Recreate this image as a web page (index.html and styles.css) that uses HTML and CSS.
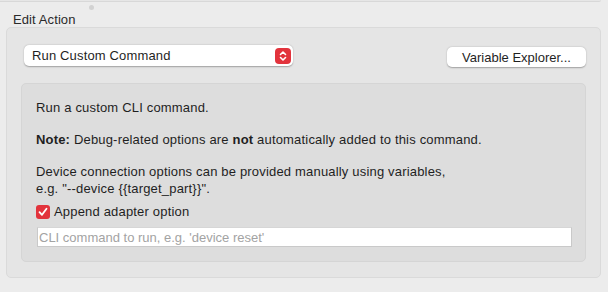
FILE: index.html
```html
<!DOCTYPE html>
<html><head>
<meta charset="utf-8">
<title>Edit Action</title>
<link rel="stylesheet" href="styles.css">
</head>
<body>
  <div class="prev-box"></div>
  <div class="splitter"><span class="dot"></span></div>
  <div class="group-title">Edit Action</div>
  <section class="group">
    <div class="toolbar">
      <div class="popup">
        <span class="popup-label">Run Custom Command</span>
        <span class="stepper">
          <svg width="16" height="16" viewBox="0 0 16 16"><path d="M5.5 6.5 L8 4 L10.5 6.5 M5.5 9.5 L8 12 L10.5 9.5" fill="none" stroke="#fff" stroke-width="1.6" stroke-linecap="round" stroke-linejoin="round"/></svg>
        </span>
      </div>
      <button class="btn">Variable Explorer...</button>
    </div>
    <div class="inner">
      <p>Run a custom CLI command.</p>
      <p><b>Note:</b> Debug-related options are <b>not</b> automatically added to this command.</p>
      <p>Device connection options can be provided manually using variables,<br>e.g. "--device {{target_part}}".</p>
      <label class="check">
        <span class="box"><svg width="14" height="14" viewBox="0 0 14 14"><path d="M3.5 7.2 L6 9.8 L10.5 3.8" fill="none" stroke="#fff" stroke-width="1.8" stroke-linecap="round" stroke-linejoin="round"/></svg></span>
        Append adapter option
      </label>
      <input class="field" type="text" placeholder="CLI command to run, e.g. 'device reset'">
    </div>
  </section>
</body></html>
```

FILE: styles.css
```css
body {
  margin: 0;
  padding: 0;
  background-color: #ececec;
  font-family: "Liberation Sans", Helvetica, Arial, sans-serif;
  font-size: 13px;
  color: #1f1f1f;
}
.prev-box {
  height: 1px;
  margin-right: 7px;
  border-bottom: 1px solid #d8d8d8;
  border-bottom-right-radius: 4px;
  background-color: #e6e6e6;
}
.splitter {
  height: 10px;
  padding-left: 89px;
  display: flex;
  align-items: center;
}
.dot {
  width: 5px;
  height: 5px;
  border-radius: 50%;
  background-color: #d2d2d2;
}
.group-title {
  padding-left: 13px;
  height: 15px;
  line-height: 15px;
  color: #2a2a2a;
  letter-spacing: 0.1px;
}
.group {
  margin: 0 7px 0 6px;
  height: 251px;
  box-sizing: border-box;
  background-color: #e5e5e5;
  border: 1px solid #dadada;
  border-radius: 5px;
  padding: 17px 14px 0 13px;
}
.toolbar {
  display: flex;
  justify-content: space-between;
  align-items: flex-start;
  padding-left: 4px;
}
.popup {
  width: 269px;
  height: 21px;
  box-sizing: border-box;
  background-color: #fff;
  border-radius: 5px;
  box-shadow: 0 0.5px 1.5px rgba(0,0,0,0.3);
  display: flex;
  align-items: center;
  justify-content: space-between;
  padding: 0 2px 0 8px;
  color: #1f1f1f;
  letter-spacing: 0.15px;
}
.stepper {
  width: 16px;
  height: 16px;
  border-radius: 4px;
  background-color: #e2333c;
  display: flex;
}
.btn {
  margin-top: 2px;
  width: 139px;
  height: 20px;
  font: inherit;
  color: #1f1f1f;
  background-color: #fff;
  border: none;
  border-radius: 5px;
  box-shadow: 0 0.5px 1.5px rgba(0,0,0,0.3);
  padding: 0;
}
.inner {
  margin-top: 16px;
  margin-left: 1px;
  background-color: #dddddd;
  border: 1px solid #d5d5d5;
  border-radius: 5px;
  padding: 15px 15px 14px 14px;
  letter-spacing: 0.18px;
}
.inner p {
  margin: 0 0 15px 0;
  line-height: 17px;
}
.inner p:nth-child(3) {
  margin-bottom: 6px;
}
.check {
  display: flex;
  align-items: center;
  gap: 4px;
  height: 17px;
}
.box {
  width: 14px;
  height: 14px;
  border-radius: 3px;
  background-color: #e2333c;
  display: flex;
}
.field {
  display: block;
  margin-top: 7px;
  margin-left: 1px;
  width: 535px;
  height: 20px;
  box-sizing: border-box;
  border: 1px solid #c9c9c9;
  border-top-color: #d6d6d6;
  background-color: #fff;
  font: inherit;
  letter-spacing: 0;
  padding: 0 1px;
  outline: none;
}
.field::placeholder {
  color: #a3a3a3;
}
```
